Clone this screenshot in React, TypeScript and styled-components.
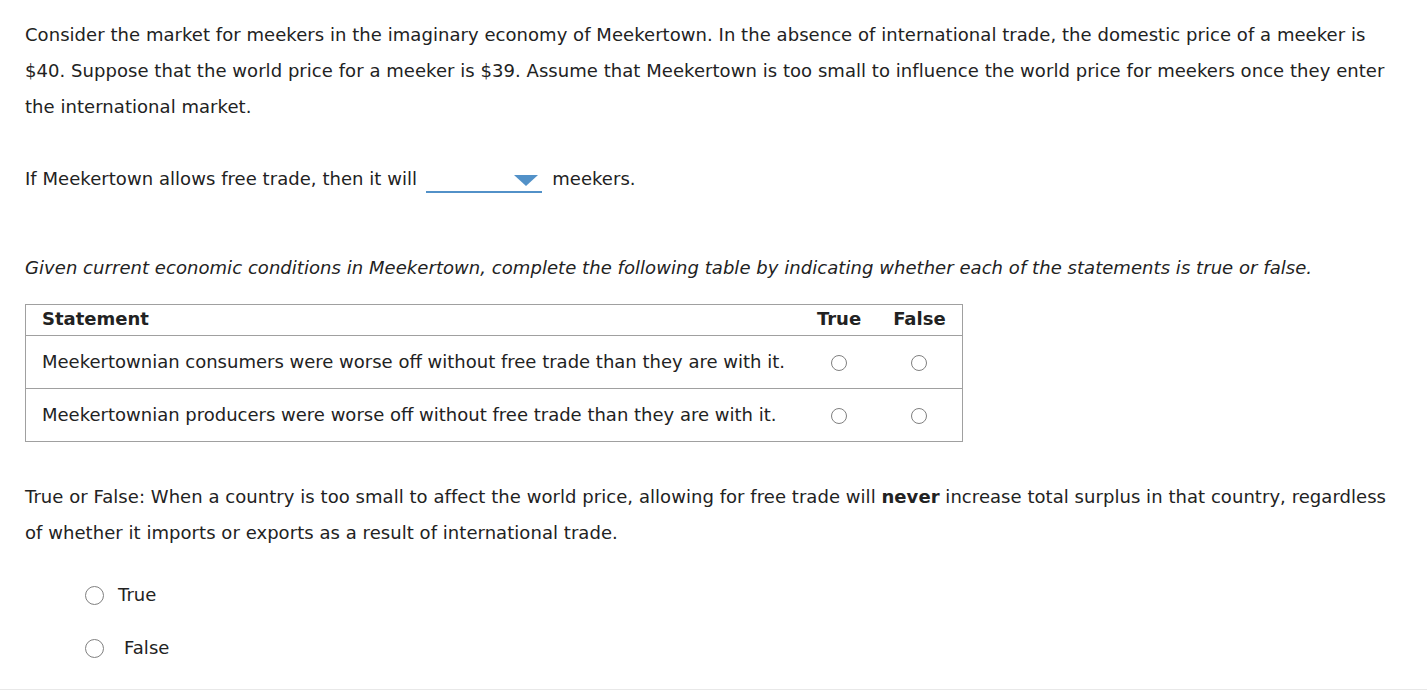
import * as React from 'react';
import styled, { createGlobalStyle } from 'styled-components';

const GlobalStyle = createGlobalStyle`
  body {
    margin: 0;
    background: #fff;
    font-family: "DejaVu Sans", Verdana, sans-serif;
    color: #222;
  }
`;

const Page = styled.div`
  height: 690px;
  border-bottom: 1px solid #e8e8e8;
  padding: 17px 30px 0 25px;
  font-size: 18px;
  line-height: 36px;
  letter-spacing: 0.05px;
  box-sizing: border-box;
  overflow: hidden;
`;

const Para = styled.p<{ $gap?: number }>`
  margin: 0 0 ${(p) => p.$gap ?? 36}px 0;
`;

const Italic = styled(Para)`
  font-style: italic;
`;

const Dropdown = styled.span`
  display: inline-flex;
  justify-content: flex-end;
  align-items: flex-start;
  width: 116px;
  height: 18px;
  margin: 0 10px 0 9px;
  border-bottom: 2px solid #5291c8;
  vertical-align: -1px;
  box-sizing: border-box;
`;

const Caret = styled.span`
  width: 0;
  height: 0;
  margin: 0 4px 0 0;
  border-left: 12px solid transparent;
  border-right: 12px solid transparent;
  border-top: 11px solid #5291c8;
`;

const Table = styled.table`
  border-collapse: collapse;
  border: 1px solid #a0a0a0;
  margin-bottom: 37px;
  line-height: 22px;
  letter-spacing: 0;
`;

const Th = styled.th<{ $left?: boolean }>`
  font-weight: bold;
  text-align: ${(p) => (p.$left ? 'left' : 'center')};
  padding: 3px 16px 5px 16px;
  border-bottom: 1px solid #a0a0a0;
`;

const Td = styled.td<{ $center?: boolean }>`
  text-align: ${(p) => (p.$center ? 'center' : 'left')};
  padding: 15px 16px;
  border-bottom: 1px solid #a0a0a0;
`;

const Circle = styled.span<{ $size: number }>`
  display: inline-block;
  width: ${(p) => p.$size}px;
  height: ${(p) => p.$size}px;
  border: 1.5px solid #808080;
  border-radius: 50%;
  box-sizing: border-box;
  vertical-align: middle;
  background: #fff;
`;

const Options = styled.div`
  display: flex;
  flex-direction: column;
  gap: 17px;
  padding: 26px 0 0 60px;
`;

const Option = styled.label<{ $labelGap: number }>`
  display: flex;
  align-items: center;
  gap: ${(p) => p.$labelGap}px;
  line-height: 36px;
`;

const statements = [
  'Meekertownian consumers were worse off without free trade than they are with it.',
  'Meekertownian producers were worse off without free trade than they are with it.',
];

export default function App() {
  return (
    <>
      <GlobalStyle />
      <Page>
        <Para>
          Consider the market for meekers in the imaginary economy of Meekertown. In the absence of
          international trade, the domestic price of a meeker is $40. Suppose that the world price for
          a meeker is $39. Assume that Meekertown is too small to influence the world price for
          meekers once they enter the international market.
        </Para>
        <Para $gap={53}>
          If Meekertown allows free trade, then it will
          <Dropdown>
            <Caret />
          </Dropdown>
          meekers.
        </Para>
        <Italic $gap={18}>
          Given current economic conditions in Meekertown, complete the following table by indicating
          whether each of the statements is true or false.
        </Italic>
        <Table>
          <thead>
            <tr>
              <Th $left>Statement</Th>
              <Th>True</Th>
              <Th>False</Th>
            </tr>
          </thead>
          <tbody>
            {statements.map((s) => (
              <tr key={s}>
                <Td>{s}</Td>
                <Td $center>
                  <Circle $size={16} />
                </Td>
                <Td $center>
                  <Circle $size={16} />
                </Td>
              </tr>
            ))}
          </tbody>
        </Table>
        <Para $gap={0}>
          True or False: When a country is too small to affect the world price, allowing for free trade
          will <b>never</b> increase total surplus in that country, regardless of whether it imports or
          exports as a result of international trade.
        </Para>
        <Options>
          <Option $labelGap={14}>
            <Circle $size={19} />
            True
          </Option>
          <Option $labelGap={20}>
            <Circle $size={19} />
            False
          </Option>
        </Options>
      </Page>
    </>
  );
}
